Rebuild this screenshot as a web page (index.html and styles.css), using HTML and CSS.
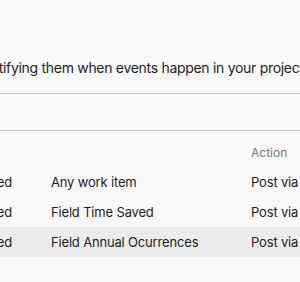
FILE: index.html
```html
<!DOCTYPE html>
<html lang="en">
<head>
  <meta charset="UTF-8">
  <meta name="viewport" content="width=device-width, initial-scale=1">
  <title>Service Hooks</title>
  <link rel="stylesheet" href="styles.css">
</head>
<body>
  <div class="page">
    <p class="intro">Integrate with your favorite services by notifying them when events happen in your project.</p>
    <div class="toolbar"></div>

    <div class="table">
      <div class="row head">
        <div class="cell first"></div>
        <div class="cell"></div>
        <div class="cell">Action</div>
      </div>
      <div class="row">
        <div class="cell first">Work item updated</div>
        <div class="cell">Any work item</div>
        <div class="cell">Post via HTTP</div>
      </div>
      <div class="row">
        <div class="cell first">Work item updated</div>
        <div class="cell">Field Time Saved</div>
        <div class="cell">Post via HTTP</div>
      </div>
      <div class="row selected">
        <div class="cell first">Work item updated</div>
        <div class="cell">Field Annual Ocurrences</div>
        <div class="cell">Post via HTTP</div>
      </div>
    </div>
  </div>
</body>
</html>
```

FILE: styles.css
```css
html, body { margin: 0; height: 100%; }
body { font-family: Inter, "Noto Sans", sans-serif; background: #f8f8f8; color: #1e1e1e; overflow: hidden; }
.page { padding-top: 58px; }
.intro { margin: 0 0 0 -267px; font-size: 14px; letter-spacing: -0.3px; line-height: 20px; white-space: nowrap; }
.toolbar { margin-top: 15px; height: 36px; border-top: 1px solid #c8c8c8; border-bottom: 1px solid #c8c8c8; }
.table { margin-top: 6px; }
.row { display: grid; grid-template-columns: 51px 200px 1fr; height: 30px; align-items: center; font-size: 13px; letter-spacing: -0.17px; white-space: nowrap; }
.row.head { color: #7a7a7a; font-size: 12px; letter-spacing: 0; }
.row.selected { background: #ebebeb; }
.cell { overflow: hidden; }
.cell.first { display: flex; justify-content: flex-end; padding-right: 39px; }
```
